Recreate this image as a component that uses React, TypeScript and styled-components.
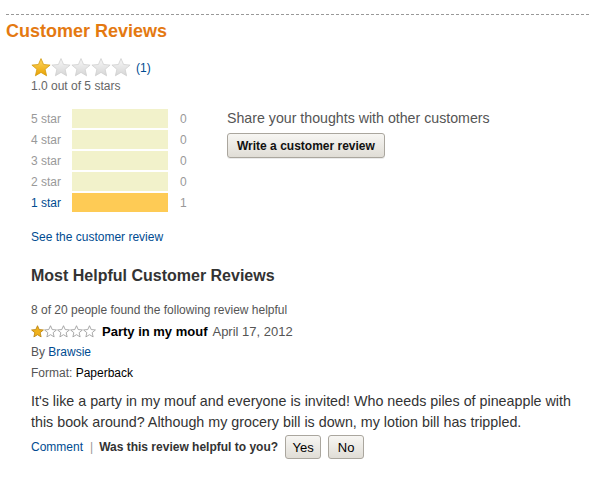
import styled, { createGlobalStyle } from 'styled-components';

const GlobalStyle = createGlobalStyle`
  body {
    margin: 0;
    background: #fff;
    font-family: "Liberation Sans", Arial, sans-serif;
  }
`;

const STAR_PATH =
  'M10 0.6 L12.6 6.5 L19.1 7.1 L14.1 11.3 L15.6 17.8 L10 14.4 L4.4 17.8 L5.9 11.3 L0.9 7.1 L7.4 6.5 Z';

const counts = [
  { label: '5 star', count: 0 },
  { label: '4 star', count: 0 },
  { label: '3 star', count: 0 },
  { label: '2 star', count: 0 },
  { label: '1 star', count: 1 },
];
const total = 1;

function BigStar({ filled, id }: { filled: boolean; id: string }) {
  return (
    <svg width="20" height="19" viewBox="0 0 20 19">
      <defs>
        <linearGradient id={id} x1="0" y1="0" x2="0" y2="1">
          {filled ? (
            <>
              <stop offset="0" stopColor="#ffd862" />
              <stop offset="1" stopColor="#e9a100" />
            </>
          ) : (
            <>
              <stop offset="0" stopColor="#f7f7f7" />
              <stop offset="1" stopColor="#d6d6d6" />
            </>
          )}
        </linearGradient>
      </defs>
      <path
        d={STAR_PATH}
        fill={`url(#${id})`}
        stroke={filled ? '#d29a10' : '#cfcfcf'}
        strokeWidth="0.8"
        strokeLinejoin="round"
      />
    </svg>
  );
}

function SmallStar({ filled }: { filled: boolean }) {
  return (
    <svg width="13" height="13" viewBox="0 0 20 19">
      <path
        d={STAR_PATH}
        fill={filled ? '#f0b21c' : '#fff'}
        stroke={filled ? '#b9820f' : '#9a9a9a'}
        strokeWidth="1.3"
        strokeLinejoin="round"
      />
    </svg>
  );
}

export default function App() {
  return (
    <>
      <GlobalStyle />
      <Section>
        <Divider />
        <Title>Customer Reviews</Title>
        <Body>
          <RatingLine>
            <Stars>
              {[0, 1, 2, 3, 4].map((i) => (
                <BigStar key={i} id={`big${i}`} filled={i === 0} />
              ))}
            </Stars>
            <CountLink>(1)</CountLink>
          </RatingLine>
          <Average>1.0 out of 5 stars</Average>

          <Summary>
            <Histogram>
              {counts.map((row) => (
                <HistRow key={row.label}>
                  <RowLabel $active={row.count > 0}>{row.label}</RowLabel>
                  <Bar>
                    <BarFill style={{ width: `${(row.count / total) * 100}%` }} />
                  </Bar>
                  <RowCount>{row.count}</RowCount>
                </HistRow>
              ))}
            </Histogram>
            <SharePanel>
              <ShareText>Share your thoughts with other customers</ShareText>
              <WriteButton>Write a customer review</WriteButton>
            </SharePanel>
          </Summary>

          <SeeLink>See the customer review</SeeLink>

          <SubTitle>Most Helpful Customer Reviews</SubTitle>

          <Review>
            <Helpful>8 of 20 people found the following review helpful</Helpful>
            <ReviewHead>
              <SmallStars>
                {[0, 1, 2, 3, 4].map((i) => (
                  <SmallStar key={i} filled={i === 0} />
                ))}
              </SmallStars>
              <ReviewTitle>Party in my mouf</ReviewTitle>
              <ReviewDate>April 17, 2012</ReviewDate>
            </ReviewHead>
            <Meta>
              By <MetaLink>Brawsie</MetaLink>
            </Meta>
            <Meta>
              Format: <MetaValue>Paperback</MetaValue>
            </Meta>
            <ReviewText>
              It's like a party in my mouf and everyone is invited! Who needs piles of pineapple with
              this book around? Although my grocery bill is down, my lotion bill has trippled.
            </ReviewText>
            <Actions>
              <ActionLink>Comment</ActionLink>
              <Sep>|</Sep>
              <Question>Was this review helpful to you?</Question>
              <VoteButton>Yes</VoteButton>
              <VoteButton>No</VoteButton>
            </Actions>
          </Review>
        </Body>
      </Section>
    </>
  );
}

const Section = styled.div`
  padding: 14px 0 0 6px;
`;

const Divider = styled.div`
  height: 1px;
  background-image: repeating-linear-gradient(to right, #999 0 3px, transparent 3px 5px);
`;

const Title = styled.h2`
  margin: 5px 0 0;
  font-size: 18px;
  line-height: 22px;
  font-weight: bold;
  color: #e47911;
`;

const Body = styled.div`
  padding-left: 25px;
`;

const RatingLine = styled.div`
  display: flex;
  align-items: center;
  margin-top: 16px;
  height: 19px;
`;

const Stars = styled.div`
  display: flex;
`;

const CountLink = styled.a`
  margin-left: 5px;
  font-size: 12px;
  color: #004b91;
  padding-top: 1px;
`;

const Average = styled.div`
  font-size: 12px;
  line-height: 15px;
  color: #666;
  margin-top: 2px;
`;

const Summary = styled.div`
  display: flex;
  margin-top: 15px;
`;

const Histogram = styled.div`
  width: 196px;
  display: flex;
  flex-direction: column;
  gap: 2px;
`;

const HistRow = styled.div`
  display: grid;
  grid-template-columns: 41px 96px 1fr;
  align-items: center;
  height: 19px;
`;

const RowLabel = styled.span<{ $active: boolean }>`
  font-size: 12px;
  color: ${(p) => (p.$active ? '#004b91' : '#999')};
`;

const Bar = styled.div`
  height: 19px;
  background: #f2f2cb;
`;

const BarFill = styled.div`
  height: 100%;
  background: #fecb55;
`;

const RowCount = styled.span`
  padding-left: 12px;
  font-size: 12px;
  color: #999;
`;

const SharePanel = styled.div`
  display: flex;
  flex-direction: column;
  align-items: flex-start;
  padding-top: 1px;
`;

const ShareText = styled.div`
  font-size: 14.2px;
  line-height: 17px;
  color: #555;
`;

const WriteButton = styled.button`
  margin-top: 6px;
  height: 25px;
  padding: 0 9px;
  font-family: inherit;
  font-size: 12px;
  font-weight: bold;
  color: #111;
  border: 1px solid #aaa69e;
  border-radius: 3px;
  background: linear-gradient(#f7f6f3, #e0ddd6);
  box-shadow: 0 1px 0 rgba(0, 0, 0, 0.08);
`;

const SeeLink = styled.a`
  display: block;
  margin-top: 18px;
  font-size: 12px;
  line-height: 15px;
  color: #004b91;
`;

const SubTitle = styled.h3`
  margin: 21px 0 0;
  font-size: 16px;
  line-height: 20px;
  font-weight: bold;
  color: #333;
`;

const Review = styled.div`
  margin-top: 17px;
`;

const Helpful = styled.div`
  font-size: 12px;
  line-height: 15px;
  color: #555;
`;

const ReviewHead = styled.div`
  display: flex;
  align-items: center;
  margin-top: 5px;
  height: 16px;
`;

const SmallStars = styled.div`
  display: flex;
  margin-right: 6px;
`;

const ReviewTitle = styled.span`
  font-size: 13px;
  font-weight: bold;
  color: #000;
`;

const ReviewDate = styled.span`
  margin-left: 5px;
  font-size: 13px;
  color: #555;
`;

const Meta = styled.div`
  margin-top: 6px;
  font-size: 12px;
  line-height: 15px;
  color: #555;
`;

const MetaLink = styled.a`
  color: #004b91;
`;

const MetaValue = styled.span`
  color: #000;
`;

const ReviewText = styled.p`
  margin: 10px 0 0;
  width: 550px;
  font-size: 14.3px;
  line-height: 21px;
  color: #333;
`;

const Actions = styled.div`
  display: flex;
  align-items: center;
  margin-top: 2px;
`;

const ActionLink = styled.a`
  font-size: 12px;
  color: #004b91;
`;

const Sep = styled.span`
  margin: 0 6px 0 7px;
  font-size: 12px;
  color: #999;
`;

const Question = styled.span`
  font-size: 12px;
  font-weight: bold;
  color: #333;
  margin-right: 7px;
`;

const VoteButton = styled.button`
  height: 24px;
  min-width: 36px;
  margin-right: 7px;
  padding: 0 6px;
  font-family: inherit;
  font-size: 13px;
  color: #000;
  border: 1px solid #aaa69e;
  border-radius: 3px;
  background: linear-gradient(#f7f6f3, #e0ddd6);
`;
